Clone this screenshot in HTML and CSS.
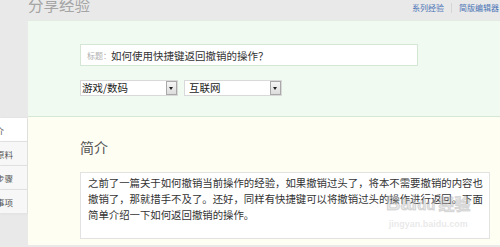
FILE: index.html
```html
<!DOCTYPE html>
<html lang="zh-CN">
  <head>
    <meta charset="UTF-8" />
    <meta name="viewport" content="width=device-width, initial-scale=1.0" />
    <title>分享经验</title>
    <link rel="stylesheet" href="styles.css">
  </head>
  <body>
    <div class="header">
      <h1 class="page-title">分享经验</h1>
      <div class="header-links">
        <a href="#" class="header-link">系列经验</a>
        <span class="header-sep"></span>
        <a href="#" class="header-link">简版编辑器</a>
      </div>
    </div>

    <div class="main">
      <div class="sidebar">
        <div class="tab tab-active tab-first"><span>简介</span></div>
        <div class="tab"><span>工具/原料</span></div>
        <div class="tab"><span>方法/步骤</span></div>
        <div class="tab"><span>注意事项</span></div>
      </div>

      <div class="content">
        <div class="basic-panel">
          <div class="title-input">
            <span class="title-label">标题：</span>
            <span class="title-text">如何使用快捷键返回撤销的操作？</span>
          </div>
          <div class="selects">
            <div class="fake-select">
              <span class="select-value">游戏/数码</span>
              <span class="select-arrow"></span>
            </div>
            <div class="fake-select">
              <span class="select-value">互联网</span>
              <span class="select-arrow"></span>
            </div>
          </div>
        </div>

        <div class="section">
          <h2 class="section-title">简介</h2>
          <div class="intro-box">
            <p class="intro-text">之前了一篇关于如何撤销当前操作的经验，如果撤销过头了，将本不需要撤销的内容也撤销了，那就措手不及了。还好，同样有快捷键可以将撤销过头的操作进行返回。下面简单介绍一下如何返回撤销的操作。</p>
            <!-- 图片水印 -->
            <div class="watermark">
              <div class="wm-logo">Bai<span class="wm-du">du</span><span class="wm-cn">经验</span></div>
              <div class="wm-url">jingyan.baidu.com</div>
            </div>
          </div>
        </div>
      </div>
    </div>
  </body>
</html>
```

FILE: styles.css
```css
body {
  margin: 0;
  width: 500px;
  height: 247px;
  overflow: hidden;
  background-color: #e9e9e9;
  font-family: "Noto Sans CJK SC", "Liberation Sans", sans-serif;
  color: #333;
}
.header {
  height: 20px;
  display: flex;
  justify-content: space-between;
  align-items: flex-start;
}
.page-title {
  margin: -5px 0 0 28px;
  font-size: 15.5px;
  line-height: 18px;
  font-weight: normal;
  color: #a5a5a5;
}
.header-links {
  display: flex;
  align-items: center;
  height: 16px;
  margin-right: 1px;
}
.header-link {
  font-size: 8px;
  line-height: 12px;
  color: #4a73b5;
  text-decoration: none;
}
.header-sep {
  width: 1px;
  height: 10px;
  background-color: #d6d6d6;
  margin: 0 7px;
}
.main {
  display: flex;
}
.sidebar {
  width: 27px;
  padding-top: 98px;
}
.tab {
  height: 23px;
  border-bottom: 1px solid #e4e4e4;
  background-color: #f7f7f7;
  overflow: hidden;
  display: flex;
  justify-content: flex-end;
  align-items: center;
  padding-right: 14px;
  box-shadow: 1px 0 2px rgba(0, 0, 0, 0.06);
}
.tab span {
  font-size: 8.5px;
  white-space: nowrap;
  color: #555;
}
.tab-active {
  background-color: #fff;
}
.tab-first {
  padding-right: 23px;
}
.content {
  flex: 1;
  margin-left: 1px;
}
.basic-panel {
  height: 97px;
  background-color: #f0faf0;
  border-top: 1px solid #e3ece3;
  border-bottom: 1px solid #d5e7d5;
  padding-left: 52px;
  box-sizing: border-box;
  padding-top: 23px;
}
.title-input {
  width: 338px;
  height: 22px;
  box-sizing: border-box;
  background-color: #fff;
  border: 1px solid #d5e6d5;
  display: flex;
  align-items: center;
  padding-left: 6px;
}
.title-label {
  font-size: 8px;
  color: #b0b0b0;
}
.title-text {
  font-size: 10.5px;
  color: #333;
}
.selects {
  display: flex;
  gap: 6px;
  margin-top: 14px;
}
.fake-select {
  width: 98px;
  height: 16px;
  box-sizing: border-box;
  background-color: #fff;
  border: 1px solid #d9d9d9;
  display: flex;
  align-items: center;
  justify-content: space-between;
}
.select-value {
  font-size: 10.5px;
  line-height: 14px;
  padding-left: 1px;
  color: #222;
}
.fake-select + .fake-select .select-value {
  padding-left: 4px;
}
.select-arrow {
  width: 11px;
  height: 14px;
  box-sizing: border-box;
  border: 1px solid #a9a9a9;
  background: linear-gradient(#f6f6f6, #dcdcdc);
  position: relative;
}
.select-arrow::after {
  content: "";
  position: absolute;
  left: 2px;
  top: 5px;
  border-left: 2.5px solid transparent;
  border-right: 2.5px solid transparent;
  border-top: 3px solid #222;
}
.section {
  background-color: #fffef3;
  padding: 19px 0 0 52px;
  height: 109px;
}
.section-title {
  margin: 0;
  font-size: 14px;
  line-height: 22px;
  font-weight: normal;
  color: #555;
}
.intro-box {
  position: relative;
  width: 410px;
  height: 67px;
  box-sizing: border-box;
  margin-top: 14px;
  background-color: #fff;
  border: 1px solid #e2e2e2;
  padding: 2px 6px 0 7px;
}
.intro-text {
  margin: 0;
  font-size: 10.4px;
  line-height: 16px;
  color: #333;
}
.watermark {
  position: absolute;
  left: 305px;
  top: 19px;
  text-align: center;
  color: rgba(190, 190, 190, 0.35);
}
.wm-logo {
  font-family: "Liberation Sans", sans-serif;
  font-weight: bold;
  font-size: 20px;
  line-height: 22px;
  -webkit-text-stroke: 1px rgba(170, 170, 170, 0.4);
}
.wm-du {
  font-size: 15px;
}
.wm-cn {
  font-family: "Noto Sans CJK SC", sans-serif;
  font-size: 16px;
  margin-left: 3px;
}
.wm-url {
  font-family: "Liberation Sans", sans-serif;
  font-size: 9px;
  font-weight: bold;
  margin-top: 3px;
}
```
